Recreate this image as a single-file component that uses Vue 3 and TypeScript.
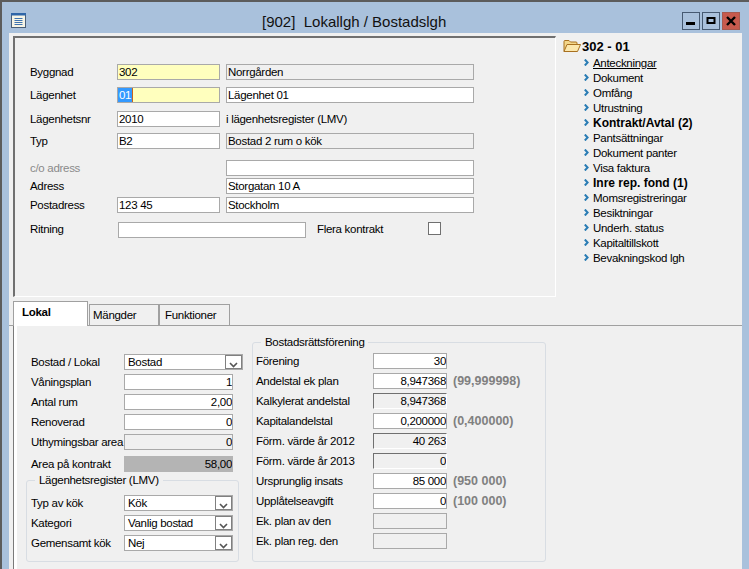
<script setup lang="ts">
const navItems = [
  { label: 'Anteckningar', cls: 'link' },
  { label: 'Dokument' },
  { label: 'Omfång' },
  { label: 'Utrustning' },
  { label: 'Kontrakt/Avtal (2)', cls: 'strong' },
  { label: 'Pantsättningar' },
  { label: 'Dokument panter' },
  { label: 'Visa faktura' },
  { label: 'Inre rep. fond (1)', cls: 'strong' },
  { label: 'Momsregistreringar' },
  { label: 'Besiktningar' },
  { label: 'Underh. status' },
  { label: 'Kapitaltillskott' },
  { label: 'Bevakningskod lgh' },
]

const tabs = ['Mängder', 'Funktioner']

const kitchenRows = [
  { label: 'Typ av kök', value: 'Kök' },
  { label: 'Kategori', value: 'Vanlig bostad' },
  { label: 'Gemensamt kök', value: 'Nej' },
]

const assocRows = [
  { label: 'Förening', value: '30', kind: 'edit', note: '' },
  { label: 'Andelstal ek plan', value: '8,947368', kind: 'edit', note: '(99,999998)' },
  { label: 'Kalkylerat andelstal', value: '8,947368', kind: 'sunken', note: '' },
  { label: 'Kapitalandelstal', value: '0,200000', kind: 'edit', note: '(0,400000)' },
  { label: 'Förm. värde år 2012', value: '40 263', kind: 'sunken', note: '' },
  { label: 'Förm. värde år 2013', value: '0', kind: 'sunken', note: '' },
  { label: 'Ursprunglig insats', value: '85 000', kind: 'edit', note: '(950 000)' },
  { label: 'Upplåtelseavgift', value: '0', kind: 'edit', note: '(100 000)' },
  { label: 'Ek. plan av den', value: '', kind: 'ro', note: '' },
  { label: 'Ek. plan reg. den', value: '', kind: 'ro', note: '' },
]
</script>

<template>
  <div class="window">
    <header class="titlebar">
      <svg class="app-icon" width="15" height="15" viewBox="0 0 15 15">
        <rect x="0.5" y="0.5" width="14" height="14" fill="#f7f5e6" stroke="#4a5f78" />
        <rect x="0" y="0" width="15" height="2.5" fill="#2f66a8" />
        <path d="M3.5 5.5h8M3.5 7.5h8M3.5 9.5h8M3.5 11.5h8" stroke="#3f74b0" stroke-width="1" />
      </svg>
      <h1 class="title">[902]&nbsp; Lokallgh / Bostadslgh</h1>
      <div class="winbtns">
        <button class="winbtn" aria-label="Minimera">
          <svg width="10" height="10" viewBox="0 0 10 10"><rect x="0" y="6" width="9" height="3" fill="#000" /></svg>
        </button>
        <button class="winbtn" aria-label="Maximera">
          <svg width="10" height="10" viewBox="0 0 10 10"><path d="M1.5 2h7v5h-7z" fill="none" stroke="#000" stroke-width="2" /></svg>
        </button>
        <button class="winbtn close" aria-label="Stäng">
          <svg width="10" height="10" viewBox="0 0 10 10"><path d="M1 1l8 8M9 1l-8 8" stroke="#000" stroke-width="2.4" /></svg>
        </button>
      </div>
    </header>

    <main class="body">
      <section class="top">
        <div class="panel">
          <div class="row">
            <span class="lbl">Byggnad</span>
            <div class="fld w103 req">302</div>
            <div class="fld w248 ro">Norrgården</div>
          </div>
          <div class="row mt7">
            <span class="lbl">Lägenhet</span>
            <div class="fld w103 req sel-fld"><span class="sel">01</span><span class="caret"></span></div>
            <div class="fld w248">Lägenhet 01</div>
          </div>
          <div class="row mt8">
            <span class="lbl">Lägenhetsnr</span>
            <div class="fld w103">2010</div>
            <span class="plain">i lägenhetsregister (LMV)</span>
          </div>
          <div class="row mt6">
            <span class="lbl">Typ</span>
            <div class="fld w103">B2</div>
            <div class="fld w248 ro">Bostad 2 rum o kök</div>
          </div>
          <div class="row mt11">
            <span class="lbl dim">c/o adress</span>
            <div class="spacer"></div>
            <div class="fld w248"></div>
          </div>
          <div class="row mt2">
            <span class="lbl">Adress</span>
            <div class="spacer"></div>
            <div class="fld w248">Storgatan 10 A</div>
          </div>
          <div class="row mt3">
            <span class="lbl">Postadress</span>
            <div class="fld w103">123 45</div>
            <div class="fld w248">Stockholm</div>
          </div>
          <div class="row mt9">
            <span class="lbl lbl-r">Ritning</span>
            <div class="fld w188"></div>
            <span class="plain flera">Flera kontrakt</span>
            <span class="check"></span>
          </div>
        </div>

        <nav class="nav">
          <div class="nav-head">
            <svg width="19" height="14" viewBox="0 0 19 14">
              <path d="M1 12.5V2.5Q1 1.5 2 1.5h4l1.5 1.5H13q1 0 1 1V5" fill="#f3d68a" stroke="#a8701f" />
              <path d="M1 12.5L4 5.5h13.5L14.5 12.5z" fill="#fbe7ad" stroke="#a8701f" stroke-linejoin="round" />
            </svg>
            <span>302 - 01</span>
          </div>
          <a v-for="item in navItems" :key="item.label" class="nav-item" :class="item.cls">
            <svg class="chev" width="5" height="7" viewBox="0 0 5 7">
              <path d="M0.8 0.5L3.6 3.5L0.8 6.5" fill="none" stroke="#2a7cb4" stroke-width="2" />
            </svg>
            <span>{{ item.label }}</span>
          </a>
        </nav>
      </section>

      <section class="tabbed">
        <div class="tabstrip">
          <div class="tab active">Lokal</div>
          <div v-for="t in tabs" :key="t" class="tab">{{ t }}</div>
        </div>

        <div class="tabbody">
          <div class="col-left">
            <div class="lrow">
              <span class="llbl">Bostad / Lokal</span>
              <div class="fld combo wide">Bostad
                <span class="cbtn"><svg width="9" height="6" viewBox="0 0 9 6"><path d="M1 1l3.5 3.5L8 1" fill="none" stroke="#555" stroke-width="1.6" /></svg></span>
              </div>
            </div>
            <div class="lrow mt4">
              <span class="llbl">Våningsplan</span>
              <div class="fld num w109">1</div>
            </div>
            <div class="lrow mt4">
              <span class="llbl">Antal rum</span>
              <div class="fld num w109">2,00</div>
            </div>
            <div class="lrow mt4">
              <span class="llbl">Renoverad</span>
              <div class="fld num w109">0</div>
            </div>
            <div class="lrow mt4">
              <span class="llbl">Uthymingsbar area</span>
              <div class="fld num w109 ro">0</div>
            </div>
            <div class="lrow mt6">
              <span class="llbl">Area på kontrakt</span>
              <div class="fld num w109 gray">58,00</div>
            </div>

            <div class="group kitchen">
              <span class="legend">Lägenhetsregister (LMV)</span>
              <div v-for="r in kitchenRows" :key="r.label" class="krow">
                <span class="klbl">{{ r.label }}</span>
                <div class="fld combo w109">{{ r.value }}
                  <span class="cbtn"><svg width="9" height="6" viewBox="0 0 9 6"><path d="M1 1l3.5 3.5L8 1" fill="none" stroke="#555" stroke-width="1.6" /></svg></span>
                </div>
              </div>
            </div>
          </div>

          <div class="group assoc">
            <span class="legend">Bostadsrättsförening</span>
            <div v-for="r in assocRows" :key="r.label" class="arow">
              <span class="albl">{{ r.label }}</span>
              <div class="fld num w74" :class="r.kind">{{ r.value }}</div>
              <span v-if="r.note" class="note">{{ r.note }}</span>
            </div>
          </div>
        </div>
      </section>
    </main>
  </div>
</template>

<style>
html, body { margin: 0; padding: 0; }
</style>

<style scoped>
.window {
  width: 749px;
  height: 569px;
  box-sizing: border-box;
  overflow: hidden;
  display: flex;
  flex-direction: column;
  background: #a9c1dc;
  border-top: 2px solid #5c5c5c;
  border-left: 2px solid #5c5c5c;
  font-family: "Liberation Sans", Arial, sans-serif;
  font-size: 11.5px;
  letter-spacing: -0.3px;
  color: #000;
}
.titlebar {
  height: 31px;
  flex: none;
  display: flex;
  align-items: flex-start;
}
.app-icon { margin: 11px 0 0 9px; flex: none; }
.title {
  margin: 11px 0 0 236px;
  font-size: 15px;
  font-weight: 400;
  line-height: 18px;
  letter-spacing: 0;
  white-space: nowrap;
  color: #111;
}
.winbtns {
  margin: 10px 9px 0 auto;
  display: flex;
  gap: 2px;
}
.winbtn {
  width: 18px;
  height: 18px;
  padding: 0;
  box-sizing: border-box;
  border: 1px solid #465a72;
  background: #a9c1dc;
  display: flex;
  align-items: center;
  justify-content: center;
}
.winbtn.close { background: #c75a4d; border-color: #a65a50; }

.body {
  flex: 1;
  margin: 0 7px;
  min-height: 0;
  background: #f0f0f0;
  display: flex;
  flex-direction: column;
}
.top {
  flex: none;
  display: flex;
  height: 265px;
  padding: 3px 0 0 4px;
  box-sizing: border-box;
}
.panel {
  width: 543px;
  height: 261px;
  box-sizing: border-box;
  padding: 26px 0 0 15px;
  border-top: 2px solid #707070;
  border-left: 2px solid #707070;
  border-right: 1px solid #fff;
  border-bottom: 1px solid #fff;
}
.row { display: flex; align-items: center; height: 16px; }
.mt2 { margin-top: 2px; }
.mt3 { margin-top: 3px; }
.mt4 { margin-top: 4px; }
.mt6 { margin-top: 6px; }
.mt7 { margin-top: 7px; }
.mt8 { margin-top: 8px; }
.mt9 { margin-top: 9px; }
.mt11 { margin-top: 11px; }
.lbl { width: 87px; flex: none; white-space: nowrap; }
.lbl-r { width: 88px; padding-bottom: 2px; }
.dim { color: #8a8a8a; }
.spacer { width: 103px; flex: none; }
.fld {
  box-sizing: border-box;
  height: 16px;
  border: 1px solid #a9a9a9;
  background: #fff;
  padding: 0 1px;
  line-height: 14px;
  white-space: nowrap;
  overflow: hidden;
  flex: none;
  position: relative;
  display: block;
}
.row .fld + .fld { margin-left: 6px; }
.spacer + .fld { margin-left: 6px; }
.plain { margin-left: 6px; white-space: nowrap; }
.flera { margin-left: 11px; width: 111px; flex: none; padding-bottom: 2px; }
.w103 { width: 103px; }
.w248 { width: 248px; }
.w188 { width: 188px; }
.w109 { width: 109px; }
.w74 { width: 74px; }
.req { background: #ffffbe; }
.ro { background: #f0f0f0; }
.gray { background: #b4b4b4; border-color: #b4b4b4; }
.sel-fld { padding-left: 0; }
.sel { background: #3399ff; color: #fff; display: inline-block; height: 14px; padding: 0 1px; }
.caret { display: inline-block; width: 1px; height: 14px; background: #c8641e; vertical-align: top; }
.check {
  width: 13px;
  height: 13px;
  box-sizing: border-box;
  border: 1px solid #707070;
  background: #fff;
  flex: none;
  align-self: flex-start;
}

.nav { margin-left: 7px; }
.nav-head {
  display: flex;
  align-items: center;
  height: 16px;
  margin-top: 2px;
  font-weight: 700;
  font-size: 13px;
  letter-spacing: 0;
}
.nav-item {
  display: flex;
  align-items: center;
  height: 15px;
  padding-left: 21px;
  white-space: nowrap;
  color: #000;
}
.nav-head + .nav-item { margin-top: 1px; }
.chev { margin-right: 4px; flex: none; }
.link span { text-decoration: underline; }
.strong { font-weight: 700; font-size: 12px; letter-spacing: 0; }

.tabbed { flex: 1; min-height: 0; display: flex; flex-direction: column; padding-left: 4px; }
.tabstrip {
  flex: none;
  height: 24px;
  margin-top: 3px;
  margin-left: -4px;
  padding-left: 4px;
  display: flex;
  align-items: flex-end;
  border-bottom: 1px solid #a0a0a0;
}
.tab {
  box-sizing: border-box;
  height: 21px;
  width: 70px;
  padding: 4px 0 0 3px;
  margin-left: 1px;
  background: #f0f0f0;
  border: 1px solid #a0a0a0;
  border-bottom: none;
  white-space: nowrap;
}
.tab:nth-child(3) { width: 71px; margin-left: 0; padding-left: 5px; }
.tab.active {
  width: 75px;
  height: 25px;
  margin: 0 0 -1px 0;
  padding: 4px 0 0 8px;
  background: #fff;
  font-weight: 700;
  position: relative;
}
.tabbody {
  flex: 1;
  min-height: 0;
  display: flex;
  align-items: flex-start;
  padding: 28px 0 0 12px;
  border-left: 1px solid #7a7a7a;
  box-shadow: inset 3px 0 0 #fff;
}
.col-left { width: 217px; flex: none; }
.lrow { display: flex; align-items: center; height: 16px; }
.llbl { width: 98px; padding-left: 5px; box-sizing: border-box; flex: none; white-space: nowrap; }
.combo { padding-left: 3px; }
.wide { width: 119px; }
.cbtn {
  position: absolute;
  top: 0;
  right: 0;
  width: 17px;
  height: 14px;
  box-sizing: border-box;
  border: 1px solid #808080;
  background: #fff;
  display: flex;
  align-items: flex-end;
  justify-content: center;
}
.num { text-align: right; padding-right: 0; }
.group {
  position: relative;
  box-sizing: border-box;
  border: 1px solid #d8dde3;
  border-radius: 3px;
}
.legend {
  position: absolute;
  top: -8px;
  left: 8px;
  padding: 0 4px;
  background: #f0f0f0;
  line-height: 14px;
  white-space: nowrap;
}
.kitchen {
  width: 213px;
  height: 82px;
  margin-top: 8px;
  padding: 14px 0 0 4px;
}
.krow { display: flex; align-items: center; height: 16px; margin-bottom: 4px; }
.klbl { width: 93px; flex: none; white-space: nowrap; }
.assoc {
  width: 294px;
  height: 220px;
  margin: -12px 0 0 9px;
  padding: 10px 0 0 3px;
}
.arow { display: flex; align-items: center; height: 16px; margin-bottom: 4px; }
.albl { width: 117px; flex: none; white-space: nowrap; }
.sunken {
  background: #f0f0f0;
  border-top: 1px solid #707070;
  border-left: 1px solid #707070;
  border-right: 1px solid #fff;
  border-bottom: 1px solid #fff;
}
.note {
  margin-left: 6px;
  color: #808080;
  font-weight: 700;
  font-size: 12.5px;
  letter-spacing: 0;
  white-space: nowrap;
}
</style>
